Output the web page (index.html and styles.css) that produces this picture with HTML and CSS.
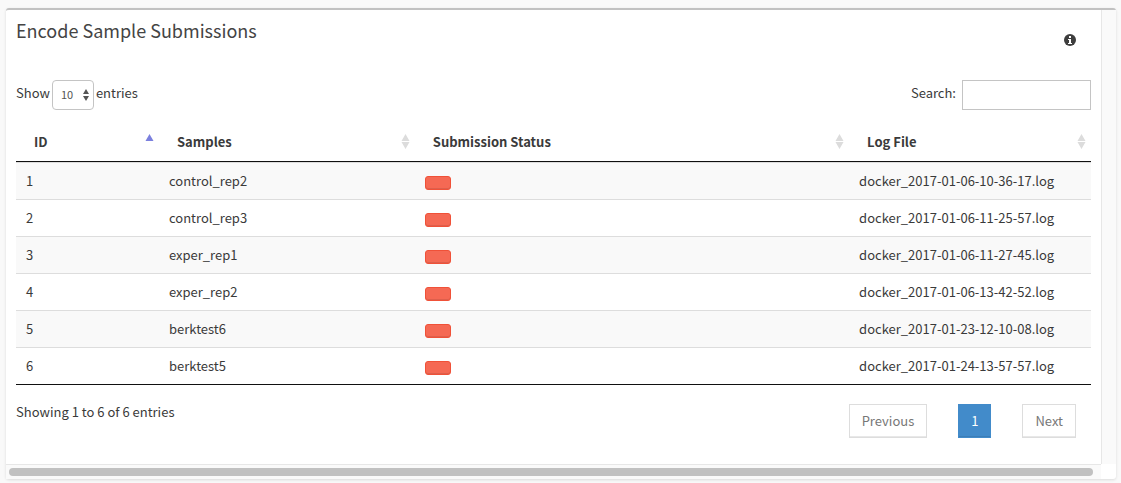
FILE: index.html
```html
<!DOCTYPE html>
<html lang="en">
<head>
<meta charset="utf-8">
<title>Encode Sample Submissions</title>
<link rel="stylesheet" href="styles.css">
</head>
<body>
<main class="panel">
  <section class="content">
    <header class="panel-header">
      <h1 class="title">Encode Sample Submissions</h1>
      <button class="info" type="button" aria-label="Information">
        <svg width="12" height="12" viewBox="0 0 12 12"><circle cx="6" cy="6" r="6" fill="#3e3e3e"/><path fill="#fff" d="M5 2h2v2H5zM4 5h3v4h1v1H4V9h1V6H4z"/></svg>
      </button>
    </header>
    <div class="controls">
      <label class="length">Show
        <span class="select-wrap">
          <select class="select"><option>10</option><option>25</option><option>50</option></select>
          <svg class="select-arrows" width="6" height="12" viewBox="0 0 6 12"><path fill="#555" d="M3 0l3 5H0zM3 12L0 7h6z"/></svg>
        </span>
        entries</label>
      <label class="search">Search:<input class="search-input" type="search"></label>
    </div>
    <table class="table">
      <colgroup><col class="col-id"><col class="col-samples"><col class="col-status"><col class="col-log"></colgroup>
      <thead>
        <tr>
          <th aria-sort="ascending"><div class="th">ID<svg class="sort" width="9" height="15" viewBox="0 0 9 15"><path fill="#7b80de" d="M4.500 0L8.500 7h-8z"/></svg></div></th>
          <th><div class="th">Samples<svg class="sort" width="9" height="15" viewBox="0 0 9 15"><path fill="#dcdcdc" d="M4.500 0L8.500 7h-8zM4.500 15L.5 8h8z"/></svg></div></th>
          <th><div class="th">Submission Status<svg class="sort" width="9" height="15" viewBox="0 0 9 15"><path fill="#dcdcdc" d="M4.500 0L8.500 7h-8zM4.500 15L.5 8h8z"/></svg></div></th>
          <th><div class="th">Log File<svg class="sort" width="9" height="15" viewBox="0 0 9 15"><path fill="#dcdcdc" d="M4.500 0L8.500 7h-8zM4.500 15L.5 8h8z"/></svg></div></th>
        </tr>
      </thead>
      <tbody>
        <tr><td>1</td><td>control_rep2</td><td><button class="status" type="button" aria-label="Status of control_rep2"></button></td><td>docker_2017-01-06-10-36-17.log</td></tr>
        <tr><td>2</td><td>control_rep3</td><td><button class="status" type="button" aria-label="Status of control_rep3"></button></td><td>docker_2017-01-06-11-25-57.log</td></tr>
        <tr><td>3</td><td>exper_rep1</td><td><button class="status" type="button" aria-label="Status of exper_rep1"></button></td><td>docker_2017-01-06-11-27-45.log</td></tr>
        <tr><td>4</td><td>exper_rep2</td><td><button class="status" type="button" aria-label="Status of exper_rep2"></button></td><td>docker_2017-01-06-13-42-52.log</td></tr>
        <tr><td>5</td><td>berktest6</td><td><button class="status" type="button" aria-label="Status of berktest6"></button></td><td>docker_2017-01-23-12-10-08.log</td></tr>
        <tr><td>6</td><td>berktest5</td><td><button class="status" type="button" aria-label="Status of berktest5"></button></td><td>docker_2017-01-24-13-57-57.log</td></tr>
      </tbody>
    </table>
    <footer class="footer">
      <p class="summary">Showing 1 to 6 of 6 entries</p>
      <nav class="pager" aria-label="Pages">
        <a class="page" href="#">Previous</a>
        <a class="page page-current" href="#" aria-current="page">1</a>
        <a class="page" href="#">Next</a>
      </nav>
    </footer>
  </section>
  <div class="track-y"></div>
  <div class="track-x"><div class="thumb"></div></div>
  <div class="corner"></div>
</main>
</body>
</html>
```
FILE: styles.css
```css
* { box-sizing: border-box; }
body {
  margin: 0;
  padding: 8px 5px 4px 6px;
  background: #f9f9f9;
  color: #3a3a3a;
  font: 13px/20px "Noto Sans CJK SC", "Open Sans", sans-serif;
}
.panel {
  display: grid;
  grid-template-columns: 1fr 15px;
  border-top: 2px solid #c1c1c1;
  border-radius: 3px;
  background: #fff;
  box-shadow: 0 1px 3px rgba(0, 0, 0, .12);
}
.content { padding: 10px 10px 26px; }
.panel-header { display: flex; justify-content: space-between; height: 60px; padding-right: 15px; }
.title { margin: 0; font-size: 18px; line-height: 20px; font-weight: 400; color: #444; }
.info { display: flex; align-self: flex-start; margin-top: 14px; padding: 0; border: 0; background: none; }
.controls { display: flex; justify-content: space-between; }
.length { display: flex; gap: 2px; line-height: 26px; }
.select-wrap { display: grid; align-items: center; }
.select-wrap > * { grid-area: 1 / 1; }
.select {
  appearance: none;
  width: 42px;
  height: 30px;
  padding: 0 8px 2px;
  border: 1px solid #c4c4c4;
  border-radius: 4px;
  background: #fff;
  color: #555;
  font: 11px/26px "Noto Sans CJK SC", "Open Sans", sans-serif;
}
.select-arrows { justify-self: end; margin-right: 5px; pointer-events: none; }
.search { display: flex; gap: 6px; line-height: 26px; }
.search-input { width: 129px; height: 30px; padding: 4px 8px; border: 1px solid #c4c4c4; border-radius: 0; background: #fff; font: inherit; }
.table { width: 100%; margin-top: 12px; border-collapse: separate; border-spacing: 0; table-layout: fixed; border-bottom: 1px solid #111; }
.col-id { width: 13.3%; }
.col-samples { width: 23.8%; }
.col-status { width: 40.4%; }
.col-log { width: 22.5%; }
.table th { height: 40px; padding: 0 5px 0 18px; border-bottom: 1px solid #111; text-align: left; font-weight: 700; }
.th { display: flex; align-items: center; justify-content: space-between; }
.table td { height: 37px; padding: 0 10px; border-top: 1px solid #ddd; }
.table tbody tr:nth-child(odd) { background: #f9f9f9; }
.status {
  display: block;
  width: 26px;
  height: 14px;
  margin-top: 4px;
  padding: 0;
  border: 1px solid #f05138;
  border-radius: 3px;
  background: #f56954;
  box-shadow: inset 0 -1px 0 rgba(0, 0, 0, .09);
}
.footer { display: flex; justify-content: space-between; padding: 19px 15px 0 0; }
.summary { margin: 0; line-height: 16px; }
.pager { display: flex; gap: 31px; }
.page {
  height: 34px;
  padding: 6px 12px;
  border: 1px solid #ddd;
  box-shadow: inset 0 -1px 0 rgba(0, 0, 0, .09);
  color: #777;
  text-decoration: none;
}
.page-current { border-color: #428bca; background: #428bca; color: #fff; }
.track-y { border-left: 1px solid #e7e7e7; background: #fafafa; }
.track-x { height: 15px; padding: 3px 8px 3px 3px; border-top: 1px solid #e7e7e7; background: #fafafa; }
.thumb { height: 8px; border-radius: 4px; background: #c1c1c1; }
```
